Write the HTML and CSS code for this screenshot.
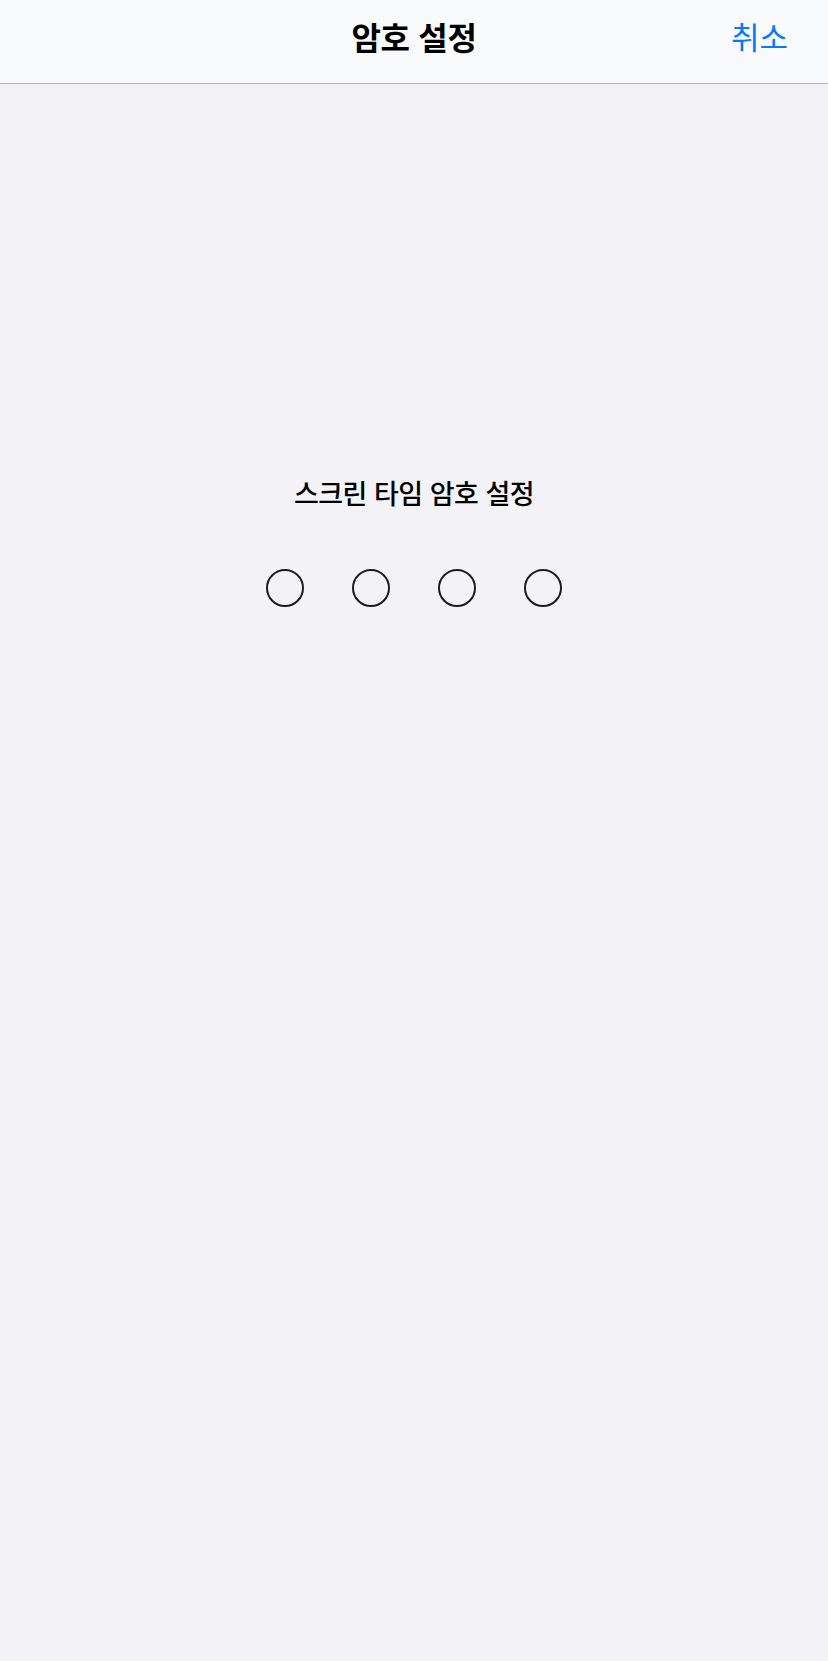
FILE: index.html
```html
<!DOCTYPE html>
<html lang="ko">
	<head>
		<meta charset="utf-8"/>
		<meta name="viewport" content="width=device-width, initial-scale=1">
		<link rel="stylesheet" href="styles.css">
		<title>암호 설정</title>
	</head>
	<body>
		<header class="navBar">
			<span class="navSide"></span>
			<h1 class="navTitle">암호 설정</h1>
			<a class="navSide navCancel" href="">취소</a>
		</header>
		<section class="passcode">
			<h2 class="passcodePrompt">스크린 타임 암호 설정</h2>
			<div class="passcodeDots">
				<span class="dot"></span>
				<span class="dot"></span>
				<span class="dot"></span>
				<span class="dot"></span>
			</div>
		</section>
	</body>
</html>
```

FILE: styles.css
```css
* {
	margin: 0;
	padding: 0;
	box-sizing: border-box;
}
html, body {
	height: 100%;
}
body {
	background-color: #f2f2f7;
	font-family: "Noto Sans CJK KR", "Noto Sans", sans-serif;
	color: #000000;
}
.navBar {
	display: flex;
	align-items: center;
	height: 84px;
	padding: 0 40px 12px 40px;
	background-color: #f9fafc;
	border-bottom: 1px solid #b4b4b6;
}
.navSide {
	flex: 1;
}
.navTitle {
	font-size: 32px;
	font-weight: 600;
	text-align: center;
	letter-spacing: -0.3px;
}
.navCancel {
	text-align: right;
	font-size: 31px;
	color: #007aff;
	text-decoration: none;
}
.passcode {
	display: flex;
	flex-direction: column;
	align-items: center;
	padding-top: 389px;
}
.passcodePrompt {
	font-size: 27px;
	font-weight: 500;
	letter-spacing: -0.5px;
}
.passcodeDots {
	display: flex;
	gap: 48px;
	margin-top: 57px;
}
.dot {
	width: 38px;
	height: 38px;
	border: 2px solid #1c1c1e;
	border-radius: 50%;
}
```
